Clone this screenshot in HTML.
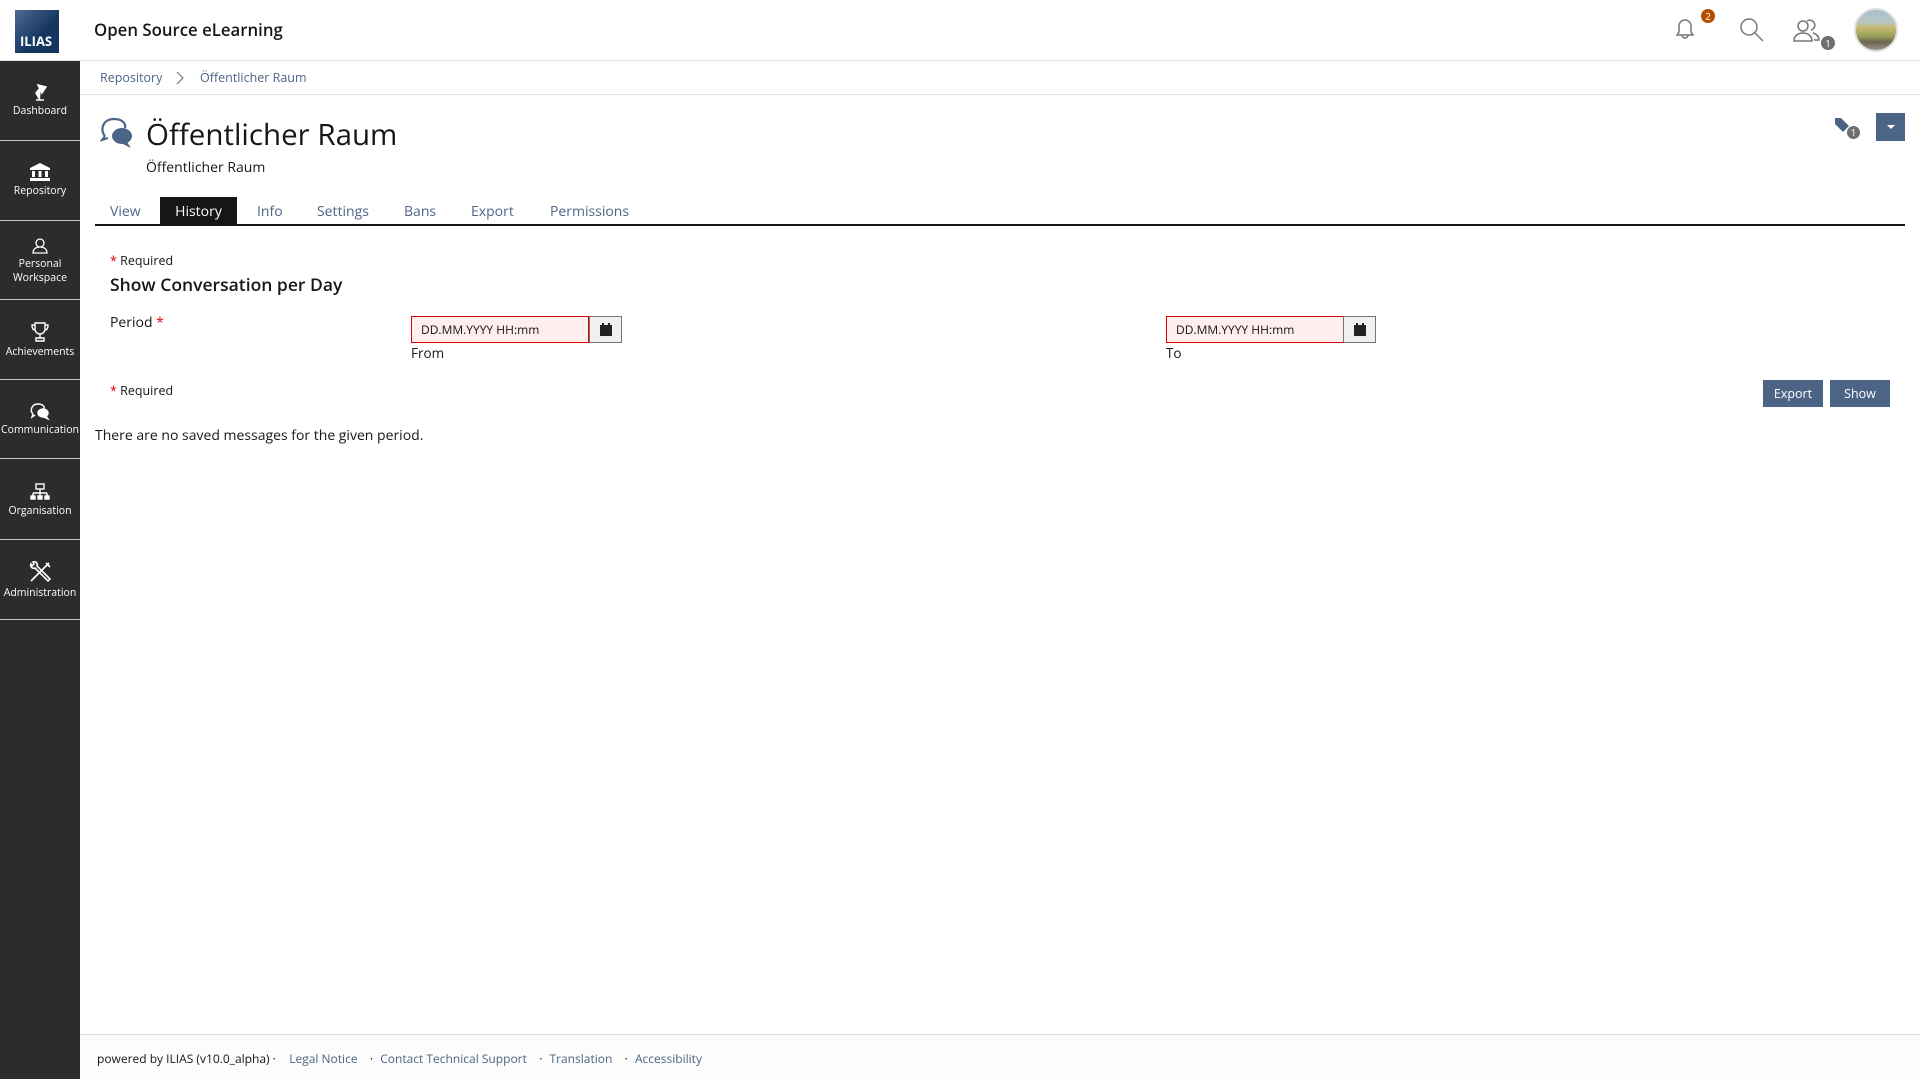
<!DOCTYPE html>
<html><head><meta charset="utf-8"><style>
*{box-sizing:border-box;margin:0;padding:0}
body{width:1920px;height:1079px;overflow:hidden;background:#fff;font-family:"Open Sans","Liberation Sans",sans-serif;color:#161616;position:relative}
.abs{position:absolute}
.hdr{left:0;top:0;width:1920px;height:61px;border-bottom:1px solid #e3e3e3;background:#fff}
.logo{left:15px;top:10px;width:44px;height:43px;background:linear-gradient(135deg,#4d6b92,#143560 60%);color:#fff;font-weight:bold;font-size:13px;padding:22px 0 0 5px}
.side{left:0;top:61px;width:80px;height:1018px;background:#2c2c2c}
.item{position:absolute;left:0;width:80px;height:80px;border-bottom:1px solid #c8c8c8;color:#fff;font-size:10.5px;text-align:center;line-height:14px}
.item svg{display:block;margin:0 auto 3px}
.crumb{left:80px;top:61px;width:1840px;height:34px;border-bottom:1px solid #e3e3e3;font-size:12.5px;color:#4c6586}
.tab{position:absolute;top:197px;height:28px;font-size:14px;color:#4c6586;line-height:29px}
.lbl{font-size:12.5px;color:#161616}
.red{color:#d00}
.inp{position:absolute;top:316px;width:178px;height:27px;border:1px solid #d00;background:#fee;font-size:12px;padding-left:9px;line-height:25px}
.cal{position:absolute;top:316px;width:33px;height:27px;border:1px solid #757575;background:#f0f0f0}
.btn{position:absolute;top:380px;height:27px;background:#4c6586;color:#fff;font-size:12.5px;text-align:center;line-height:27px}
.foot{left:80px;top:1034px;width:1840px;height:45px;border-top:1px solid #ddd;background:#fcfcfc;font-size:12px;padding:15px 0 0 17px}
.foot a{color:#4c6586;text-decoration:none;margin-left:4px;margin-right:3px}
</style></head><body>
<div class="abs hdr"></div>
<div class="abs logo">ILIAS</div>
<div class="abs" style="left:94px;top:18px;font-size:16.8px;font-weight:600">Open Source eLearning</div>
<svg class="abs" style="left:1673px;top:16px" width="24" height="26" viewBox="0 0 24 26" fill="none" stroke="#777" stroke-width="1.5"><path d="M4 19h16l-2-3v-6a6 6 0 0 0-12 0v6z M9 19a3 3 0 0 0 6 0"/></svg>
<div class="abs" style="left:1701px;top:9px;width:14px;height:14px;border-radius:7px;background:#b54f00;color:#fff;font-size:10px;text-align:center;line-height:14px">2</div>
<svg class="abs" style="left:1739px;top:17px" width="26" height="26" viewBox="0 0 26 26" fill="none" stroke="#777" stroke-width="1.5"><circle cx="10" cy="10" r="8"/><path d="M16 16l8 8"/></svg>
<svg class="abs" style="left:1793px;top:17px" width="28" height="26" viewBox="0 0 28 26" fill="none" stroke="#777" stroke-width="1.5"><circle cx="10" cy="9" r="5"/><path d="M1 24c0-5 4-8 9-8s9 3 9 8z M14 4a5 5 0 1 1 4 9 M20 16c3 1 6 3 6 7h-5"/></svg>
<div class="abs" style="left:1821px;top:36px;width:14px;height:14px;border-radius:7px;background:#6f6f6f;color:#fff;font-size:10px;text-align:center;line-height:14px">1</div>
<div class="abs" style="left:1854px;top:8px;width:44px;height:44px;border-radius:22px;border:2px solid #ddd;background:linear-gradient(#a9c0cf 0%,#b8c6c4 30%,#c5b770 45%,#9aa25c 65%,#6b6350 80%,#9a9385 100%)"></div>
<div class="abs side">
<div class="item" style="top:0"><svg style="margin-top:20px" width="18" height="20" viewBox="0 0 18 20" fill="none" stroke="#fff" stroke-width="1.5"><path d="M5 19h8 M9 19l-4-7 5-6 M7 4l8 2-4 6z" fill="#fff"/></svg>Dashboard</div>
<div class="item" style="top:80px"><svg style="margin-top:22px" width="20" height="18" viewBox="0 0 20 18" fill="#fff"><path d="M10 0L0 5v2h20V5z M2 8h3v6H2z M8.5 8h3v6h-3z M15 8h3v6h-3z M0 15h20v3H0z"/></svg>Repository</div>
<div class="item" style="top:159px"><svg style="margin-top:18px" width="16" height="16" viewBox="0 0 16 16" fill="none" stroke="#fff" stroke-width="1.3"><circle cx="8" cy="5" r="4"/><path d="M1 15c0-4 3-6 7-6s7 2 7 6z"/></svg>Personal<br>Workspace</div>
<div class="item" style="top:239px"><svg style="margin-top:22px" width="18" height="20" viewBox="0 0 18 20" fill="none" stroke="#fff" stroke-width="1.4"><path d="M4 1h10v6a5 5 0 0 1-10 0z M4 3H1c0 3 1 5 3 5 M14 3h3c0 3-1 5-3 5 M9 12v4 M5 19h8v-3H5z"/></svg>Achievements</div>
<div class="item" style="top:318px"><svg style="margin-top:23px" width="20" height="18" viewBox="0 0 20 18" fill="none" stroke="#fff" stroke-width="1.4"><path d="M3 12C0 9 1 2 8 2c5 0 7 3 6 5 M3 12l-1 3 3-2"/><ellipse cx="13" cy="11" rx="5" ry="4" fill="#fff"/><path d="M16 14l2 3-4-2" fill="#fff"/></svg>Communication</div>
<div class="item" style="top:399px"><svg style="margin-top:23px" width="20" height="18" viewBox="0 0 20 18" fill="none" stroke="#fff" stroke-width="1.4"><rect x="6" y="1" width="8" height="5"/><path d="M10 6v4 M3 10h14 M3 10v3 M10 10v3 M17 10v3"/><rect x="1" y="13" width="4" height="3" fill="#fff"/><rect x="8" y="13" width="4" height="3" fill="#fff"/><rect x="15" y="13" width="4" height="3" fill="#fff"/></svg>Organisation</div>
<div class="item" style="top:479px"><svg style="margin-top:21px" width="24" height="22" viewBox="0 0 24 22" fill="none" stroke="#fff" stroke-width="1.6"><path d="M3 20L21 2 M18 2l4 4 M3 3a3 3 0 0 0 4 4l13 13 2-2L9 5a3 3 0 0 0-4-4l1 2-2 2z"/></svg>Administration</div>
</div>
<div class="abs crumb"><span class="abs" style="left:20px;top:8px">Repository</span><svg class="abs" style="left:96px;top:10px" width="8" height="14" viewBox="0 0 8 14" fill="none" stroke="#777" stroke-width="1.2"><path d="M1 1l6 6-6 6"/></svg><span class="abs" style="left:120px;top:8px">Öffentlicher Raum</span></div>
<svg class="abs" style="left:100px;top:116px" width="34" height="32" viewBox="0 0 34 32"><path d="M5 20C0 15 2 3 14 3c9 0 12 5 11 9" fill="none" stroke="#4c6586" stroke-width="2.2"/><path d="M5 20l-3 4 6-2" fill="none" stroke="#4c6586" stroke-width="2"/><ellipse cx="22" cy="20" rx="10" ry="8" fill="#4c6586"/><path d="M27 26l4 6-8-4z" fill="#4c6586"/></svg>
<div class="abs" style="left:146px;top:113px;font-size:29.5px;color:#161616">Öffentlicher Raum</div>
<div class="abs" style="left:146px;top:158px;font-size:14px">Öffentlicher Raum</div>
<svg class="abs" style="left:1834px;top:117px" width="16" height="16" viewBox="0 0 16 16"><path d="M1 1h6l8 8-6 6-8-8z" fill="#4c6586"/></svg>
<div class="abs" style="left:1847px;top:126px;width:13px;height:13px;border-radius:7px;background:#6f6f6f;color:#fff;font-size:10px;text-align:center;line-height:13px">1</div>
<div class="abs" style="left:1876px;top:113px;width:29px;height:28px;background:#4c6586"><div style="margin:12px auto 0;width:0;height:0;border-left:4px solid transparent;border-right:4px solid transparent;border-top:4px solid #fff"></div></div>
<div class="abs" style="left:95px;top:224px;width:1810px;height:2px;background:#161616"></div>
<div class="tab" style="left:110px">View</div>
<div class="tab" style="left:160px;width:77px;background:#161616;color:#fff;text-align:center">History</div>
<div class="tab" style="left:257px">Info</div>
<div class="tab" style="left:317px">Settings</div>
<div class="tab" style="left:404px">Bans</div>
<div class="tab" style="left:471px">Export</div>
<div class="tab" style="left:550px">Permissions</div>
<div class="abs lbl" style="left:110px;top:252px"><span class="red">*</span> Required</div>
<div class="abs" style="left:110px;top:273px;font-size:17.5px;font-weight:600">Show Conversation per Day</div>
<div class="abs" style="left:110px;top:313px;font-size:14px">Period <span class="red">*</span></div>
<div class="inp" style="left:411px">DD.MM.YYYY HH:mm</div>
<div class="cal" style="left:589px"><svg style="margin:6px 0 0 10px" width="12" height="13" viewBox="0 0 12 13" fill="#222"><rect x="0" y="2" width="12" height="11"/><rect x="2" y="0" width="2" height="3"/><rect x="8" y="0" width="2" height="3"/></svg></div>
<div class="abs" style="left:411px;top:344px;font-size:13.5px">From</div>
<div class="inp" style="left:1166px">DD.MM.YYYY HH:mm</div>
<div class="cal" style="left:1343px"><svg style="margin:6px 0 0 10px" width="12" height="13" viewBox="0 0 12 13" fill="#222"><rect x="0" y="2" width="12" height="11"/><rect x="2" y="0" width="2" height="3"/><rect x="8" y="0" width="2" height="3"/></svg></div>
<div class="abs" style="left:1166px;top:344px;font-size:13.5px">To</div>
<div class="abs lbl" style="left:110px;top:382px"><span class="red">*</span> Required</div>
<div class="btn" style="left:1763px;width:60px">Export</div>
<div class="btn" style="left:1830px;width:60px">Show</div>
<div class="abs" style="left:95px;top:426px;font-size:14px">There are no saved messages for the given period.</div>
<div class="abs foot">powered by ILIAS (v10.0_alpha) · &nbsp; <a>Legal Notice</a> &nbsp; · <a>Contact Technical Support</a> &nbsp; · <a>Translation</a> &nbsp; · <a>Accessibility</a></div>
</body></html>
